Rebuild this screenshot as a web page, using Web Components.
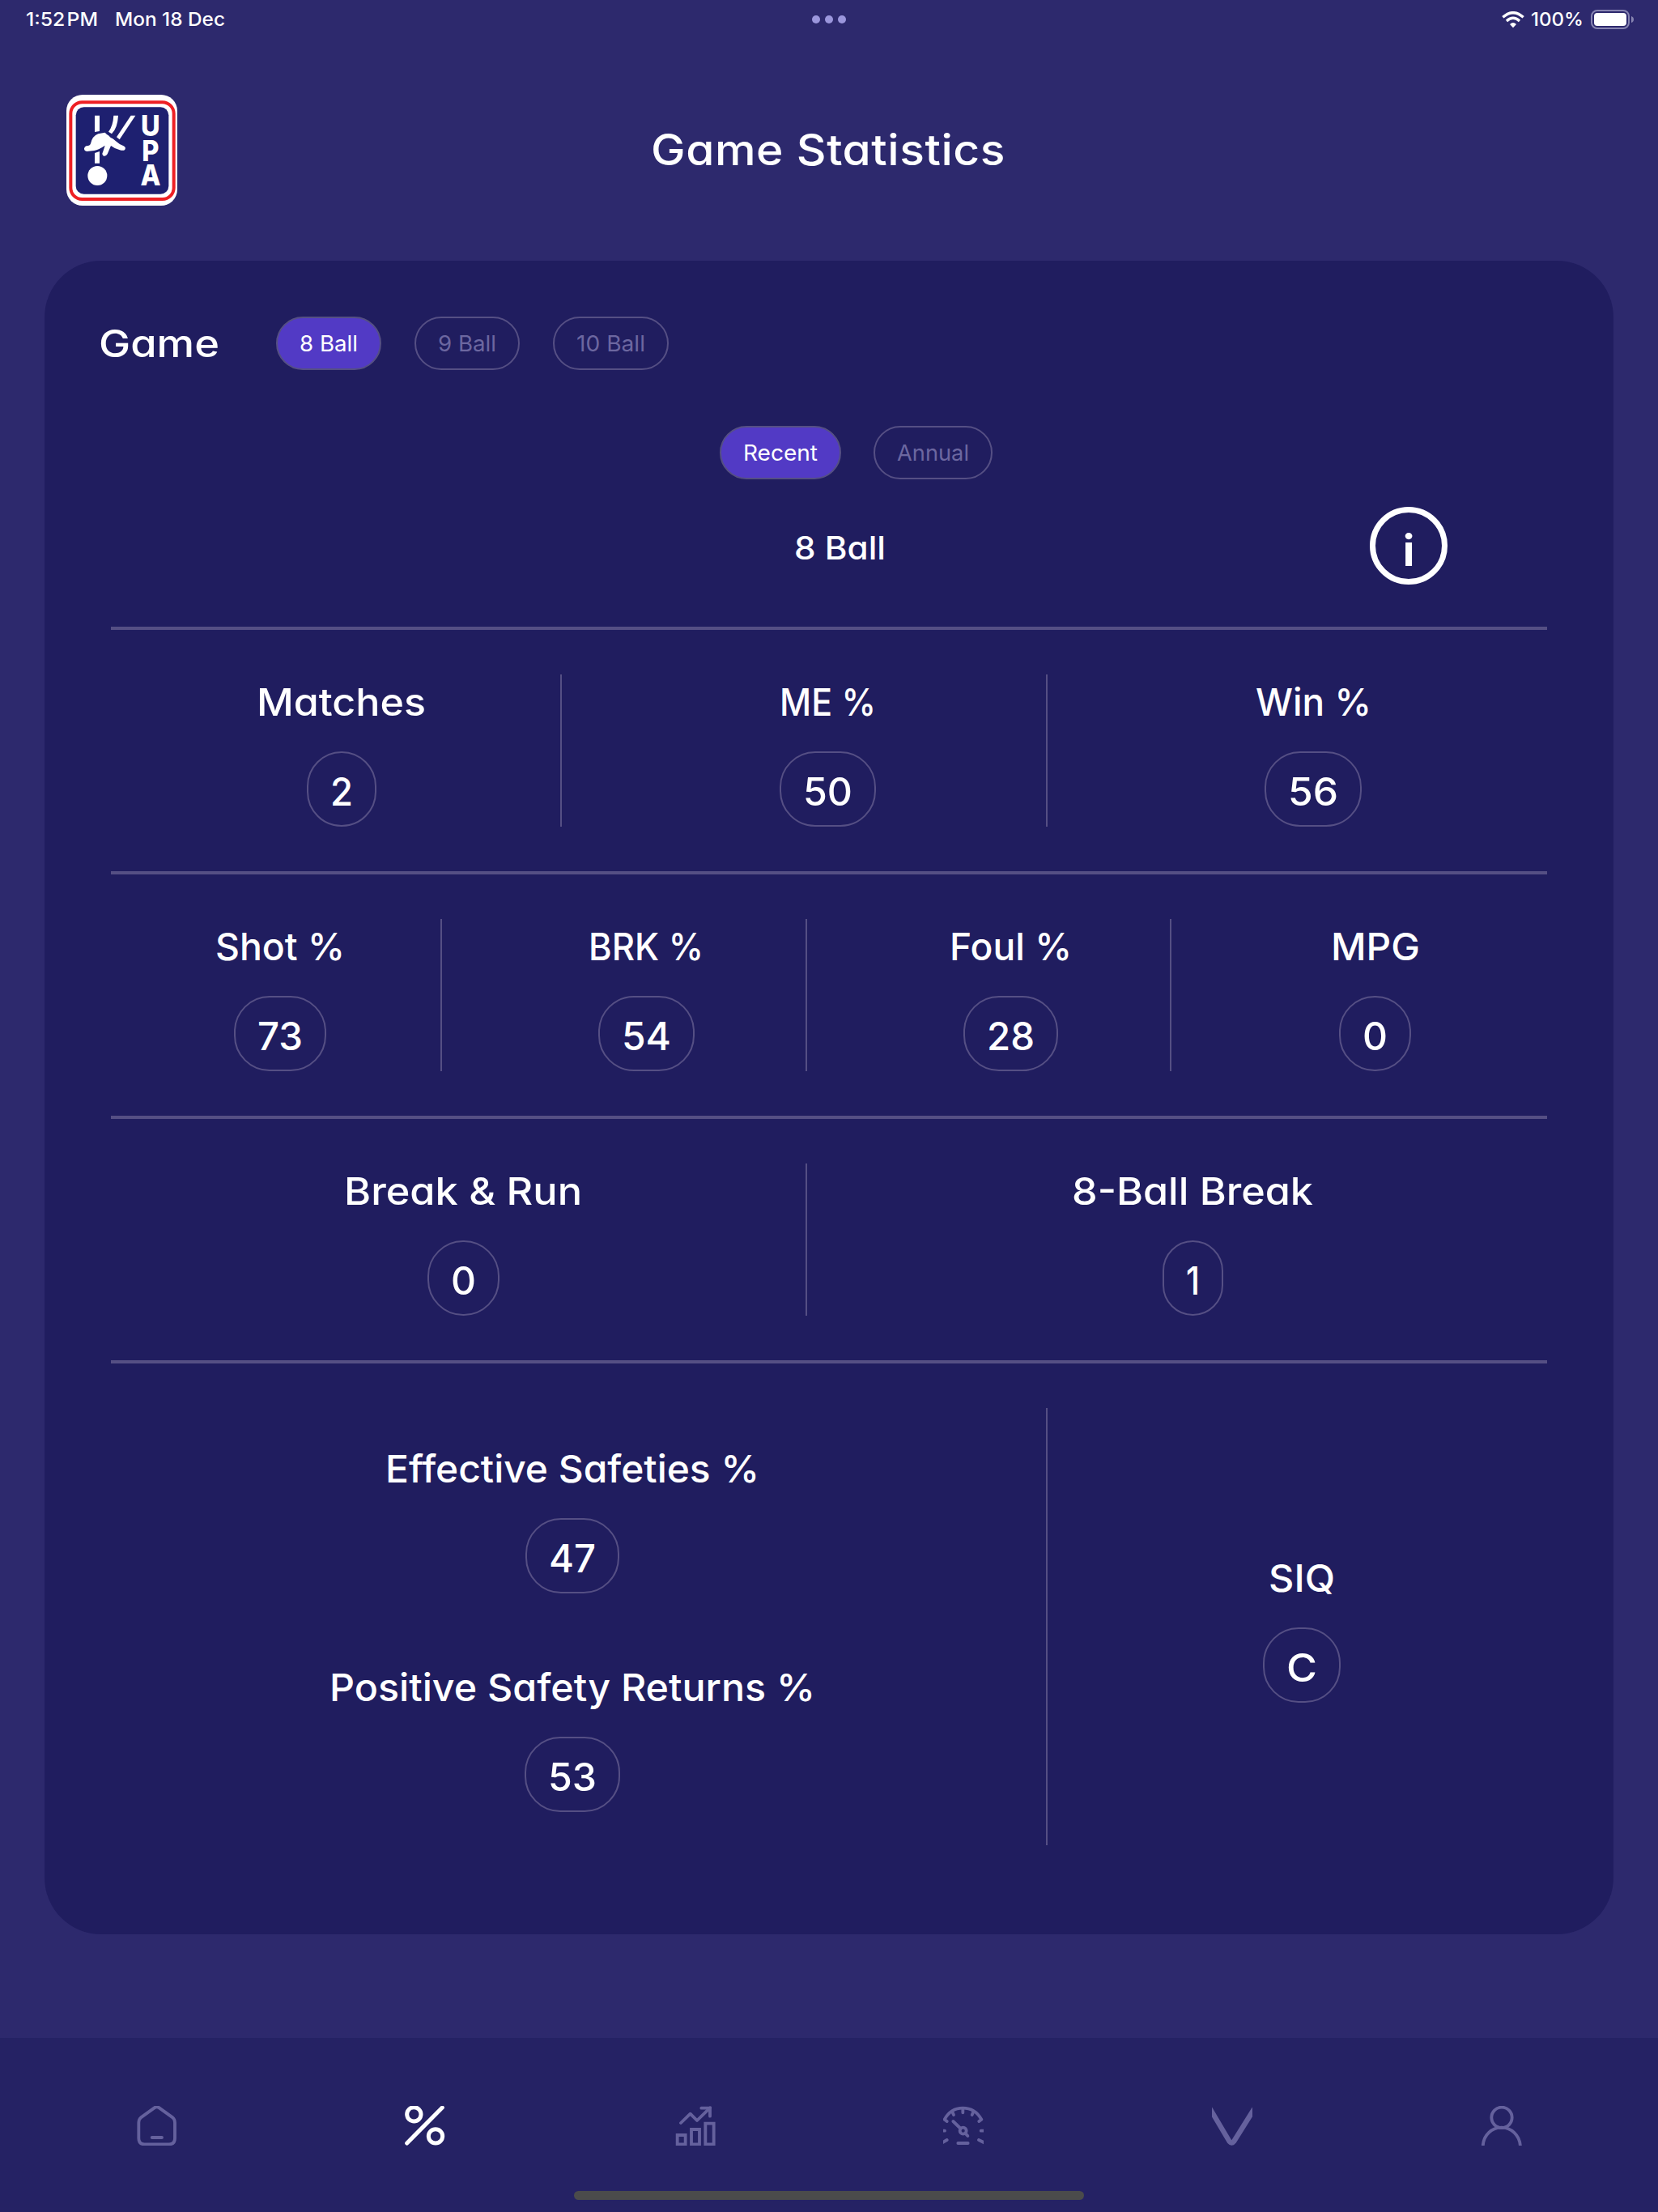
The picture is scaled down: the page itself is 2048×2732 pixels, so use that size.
<!DOCTYPE html>
<html lang="en">
<head>
<meta charset="utf-8">
<title>Game Statistics</title>
<style>
  html, body {
    margin: 0;
    height: 100%;
  }
  body {
    --line: #554f84;
    --muted: #6c67a0;
    --accent: #523ac5;
    background: #2d296d;
    color: #fff;
    font-family: Inter, "Open Sans", sans-serif;
    font-weight: 500;
  }
</style>
</head>
<body>
<stats-app></stats-app>

<script>
// Text run widened or narrowed to a given advance width
class FitText extends HTMLElement {
  constructor() {
    super();
    this.attachShadow({ mode: 'open' });
    this.shadowRoot.innerHTML = `
      <style>
        :host {
          display: block;
          white-space: nowrap;
        }
        span {
          display: block;
          width: max-content;
          transform-origin: 0 50%;
        }
      </style>
      <span><slot></slot></span>
    `;
  }

  connectedCallback() {
    const width = Number(this.getAttribute('width'));
    const span = this.shadowRoot.querySelector('span');
    const natural = span.getBoundingClientRect().width;
    if (!width || !natural) return;
    this.style.width = `${width}px`;
    span.style.transform = `scaleX(${width / natural})`;
  }
}

class StatusBar extends HTMLElement {
  constructor() {
    super();
    this.attachShadow({ mode: 'open' });
    this.shadowRoot.innerHTML = `
      <style>
        :host {
          display: grid;
          grid-template-columns: 1fr auto 1fr;
          align-items: center;
          height: 48px;
          padding: 0 29px;
          box-sizing: border-box;
          font-size: 23px;
          line-height: 28px;
        }
        .left, .right, .dots {
          display: flex;
          align-items: center;
        }
        .left {
          gap: 21px;
          margin-left: 3px;
        }
        .time {
          word-spacing: -4px;
        }
        .right {
          justify-content: flex-end;
        }
        .dots {
          gap: 6px;
        }
        .dots i {
          width: 10px;
          height: 10px;
          border-radius: 50%;
          background: #9b96dc;
        }
        svg {
          display: block;
        }
        .wifi {
          margin-right: 8px;
        }
        .battery {
          margin-left: 9px;
        }
      </style>
      <div class="left">
        <fit-text class="time" width="89">1:52 PM</fit-text>
        <fit-text width="136">Mon 18 Dec</fit-text>
      </div>
      <div class="dots"><i></i><i></i><i></i></div>
      <div class="right">
        <svg class="wifi" width="28" height="21" viewBox="0 0 84 63" fill="none" stroke="#fff">
          <path d="M4 22 Q42 -12 80 22" stroke-width="10"/>
          <path d="M18 36 Q42 14 66 36" stroke-width="10"/>
          <path d="M30 48 Q42 36 54 48 L42 61 Z" fill="#fff" stroke="none"/>
        </svg>
        <fit-text width="65">100%</fit-text>
        <svg class="battery" width="54" height="24" viewBox="0 0 54 24">
          <rect x="1" y="1" width="46" height="22" rx="7" fill="none" stroke="#8784b1" stroke-width="2"/>
          <rect x="4" y="4" width="40" height="16" rx="4" fill="#fff"/>
          <path d="M50 8 Q53 9 53 12 Q53 15 50 16 Z" fill="#8784b1"/>
        </svg>
      </div>
    `;
  }
}

class UpaLogo extends HTMLElement {
  constructor() {
    super();
    this.attachShadow({ mode: 'open' });
    this.shadowRoot.innerHTML = `
      <style>
        :host {
          display: block;
          width: 137px;
          height: 137px;
        }
        svg {
          display: block;
        }
        text {
          font: 800 105px Inter, sans-serif;
          text-anchor: middle;
        }
      </style>
      <svg width="137" height="137" viewBox="246 351 411 411" fill="#fff">
        <rect x="246" y="351" width="411" height="411" rx="60"/>
        <rect x="262" y="379" width="382" height="359" rx="42" fill="none" stroke="#ee2024" stroke-width="12"/>
        <rect x="281" y="397" width="344" height="322" rx="30" fill="#1e2070"/>
        <path d="M351 428h18v58l-18 3z"/>
        <path d="M421 428h17q-2 45-24 68l-12-8q17-22 19-60z"/>
        <path d="M485 428h17l-59 89-11-9z"/>
        <path d="M320 541 Q334 541 336 532 Q342 504 364 496 L389 491 Q395 498 402 502 Q409 511 418 514 L431 524 Q444 536 458 541 Q468 546 463 554 Q458 560 444 556 Q425 551 411 540 L398 571 Q393 580 384 578 Q376 572 381 564 L389 539 Q366 555 349 558 L322 561 Q311 559 312 550 Q314 542 320 541Z"/>
        <path d="M351 567l18-6v44h-18z"/>
        <circle cx="361" cy="651" r="36"/>
        <text transform="scale(.93 1)" x="600 600 600" y="504 597 688">UPA</text>
      </svg>
    `;
  }
}

class PageHeader extends HTMLElement {
  constructor() {
    super();
    this.attachShadow({ mode: 'open' });
    this.shadowRoot.innerHTML = `
      <style>
        :host {
          display: grid;
          grid-template-columns: 137px 1fr 137px;
          align-items: center;
          justify-items: center;
          padding: 69px 85px 68px 82px;
          font-size: 53px;
          line-height: 64px;
          letter-spacing: .01em;
          font-feature-settings: "cv11";
        }
        h1 {
          margin: 0 0 1px;
          font: inherit;
        }
      </style>
      <upa-logo></upa-logo>
      <h1><slot></slot></h1>
    `;
  }
}

class FilterChip extends HTMLElement {
  constructor() {
    super();
    this.attachShadow({ mode: 'open' });
    this.shadowRoot.innerHTML = `
      <style>
        :host {
          display: flex;
          align-items: center;
          height: 66px;
          padding: 0 27px;
          box-sizing: border-box;
          border: 2px solid var(--line);
          border-radius: 33px;
          color: var(--muted);
          font-size: 27.5px;
          font-weight: 400;
          font-feature-settings: normal;
        }
        :host([active]) {
          background: var(--accent);
          color: #fff;
        }
      </style>
      <slot></slot>
    `;
  }
}

class StatCell extends HTMLElement {
  constructor() {
    super();
    this.attachShadow({ mode: 'open' });
  }

  connectedCallback() {
    const label = this.getAttribute('label');
    const value = this.getAttribute('value');
    const width = this.getAttribute('label-width');
    const pill = this.getAttribute('pill-width');

    this.shadowRoot.innerHTML = `
      <style>
        :host {
          display: flex;
          flex-direction: column;
          align-items: center;
          height: 188px;
        }
        .label {
          height: 72px;
          font-size: 47px;
          line-height: 68px;
        }
        .value {
          display: flex;
          align-items: center;
          justify-content: center;
          width: ${pill}px;
          height: 93px;
          margin-top: 23px;
          padding-top: 6px;
          box-sizing: border-box;
          border: 2px solid var(--line);
          border-radius: 44px;
          font-size: 48px;
        }
      </style>
      <div class="label"><fit-text width="${width}">${label.replace('&', '&amp;')}</fit-text></div>
      <div class="value"><fit-text width="${pill - 58}">${value}</fit-text></div>
    `;
  }
}

// One row of cells split by vertical rules, closed above by a horizontal one
class StatRow extends HTMLElement {
  constructor() {
    super();
    this.attachShadow({ mode: 'open' });
  }

  connectedCallback() {
    this.shadowRoot.innerHTML = `
      <style>
        :host {
          display: block;
        }
        .rule {
          height: 4px;
          margin: 0 82px;
          background: var(--line);
        }
        .cells {
          display: grid;
          grid-template-columns: ${this.getAttribute('columns')};
          margin-left: 38px;
          padding: 55px 0;
        }
        ::slotted(*) {
          padding-left: ${this.getAttribute('inset')}px;
          border-right: 2px solid var(--line);
        }
        ::slotted(:last-child) {
          border-right-color: transparent;
        }
      </style>
      <div class="rule"></div>
      <div class="cells"><slot></slot></div>
    `;
  }
}

class StatGroup extends HTMLElement {
  constructor() {
    super();
    this.attachShadow({ mode: 'open' });
    this.shadowRoot.innerHTML = `
      <style>
        :host {
          display: flex;
          flex-direction: column;
          justify-content: center;
          gap: 82px;
          height: 540px;
          box-sizing: border-box;
        }
      </style>
      <slot></slot>
    `;
  }
}

class StatsCard extends HTMLElement {
  constructor() {
    super();
    this.attachShadow({ mode: 'open' });
    this.shadowRoot.innerHTML = `
      <style>
        :host {
          display: block;
          height: 2067px;
          margin: 0 55px;
          padding-top: 69px;
          box-sizing: border-box;
          border-radius: 70px;
          background: #201d5f;
          font-feature-settings: "cv11";
        }
        .games, .periods {
          display: flex;
          align-items: center;
          gap: 41px;
        }
        .games {
          padding-left: 67px;
        }
        .games h2 {
          width: 178px;
          margin: 0;
          font-size: 47px;
          font-weight: 500;
          line-height: 66px;
        }
        .periods {
          margin-top: 69px;
          padding-left: 834px;
          gap: 40px;
        }
        .heading {
          display: grid;
          grid-template-columns: 327px 1310px 96px;
          align-items: center;
          justify-items: center;
          margin: 34px 0 52px;
          font-size: 39px;
        }
        .heading fit-text {
          grid-column: 2;
          padding-top: 4px;
        }
        .info {
          display: flex;
          align-items: center;
          justify-content: center;
          width: 96px;
          height: 96px;
          padding-top: 12px;
          box-sizing: border-box;
          border: 7px solid #fff;
          border-radius: 50%;
          font-size: 54px;
          font-weight: 650;
          line-height: 60px;
        }
      </style>
      <div class="games">
        <h2><fit-text width="149">Game</fit-text></h2>
        <filter-chip active><fit-text width="72">8 Ball</fit-text></filter-chip>
        <filter-chip><fit-text width="72">9 Ball</fit-text></filter-chip>
        <filter-chip><fit-text width="85">10 Ball</fit-text></filter-chip>
      </div>
      <div class="periods">
        <filter-chip active><fit-text width="92">Recent</fit-text></filter-chip>
        <filter-chip><fit-text width="89">Annual</fit-text></filter-chip>
      </div>
      <div class="heading">
        <fit-text width="113">8 Ball</fit-text>
        <div class="info">i</div>
      </div>
      <stat-row columns="601px 600px 600px" inset="58">
        <stat-cell label="Matches" label-width="209" value="2" pill-width="86"></stat-cell>
        <stat-cell label="ME %" label-width="119" value="50" pill-width="119"></stat-cell>
        <stat-cell label="Win %" label-width="143" value="56" pill-width="120"></stat-cell>
      </stat-row>
      <stat-row columns="453px 451px 450px 450px" inset="55">
        <stat-cell label="Shot %" label-width="160" value="73" pill-width="114"></stat-cell>
        <stat-cell label="BRK %" label-width="142" value="54" pill-width="119"></stat-cell>
        <stat-cell label="Foul %" label-width="151" value="28" pill-width="117"></stat-cell>
        <stat-cell label="MPG" label-width="110" value="0" pill-width="89"></stat-cell>
      </stat-row>
      <stat-row columns="904px 898px" inset="56">
        <stat-cell label="Break &amp; Run" label-width="294" value="0" pill-width="89"></stat-cell>
        <stat-cell label="8-Ball Break" label-width="298" value="1" pill-width="75"></stat-cell>
      </stat-row>
      <stat-row columns="1201px 600px" inset="29">
        <stat-group>
          <stat-cell label="Effective Safeties %" label-width="462" value="47" pill-width="116"></stat-cell>
          <stat-cell label="Positive Safety Returns %" label-width="600" value="53" pill-width="118"></stat-cell>
        </stat-group>
        <stat-group>
          <stat-cell label="SIQ" label-width="82" value="C" pill-width="96"></stat-cell>
        </stat-group>
      </stat-row>
    `;
  }
}

const ICONS = {
  home: `
    <path d="M65 7 Q74 1 83 7 L133 43 Q141 50 141 62 V120 Q141 142 120 142 H28 Q7 142 7 120 V62 Q7 50 15 43 Z"/>
    <path d="M56 117H93"/>`,
  percent: `
    <circle cx="34" cy="31" r="26" stroke-width="15"/>
    <circle cx="114" cy="112" r="26" stroke-width="15"/>
    <path d="M139 6L8 138" stroke-width="15"/>`,
  chart: `
    <path d="M21 63L56 29L81 54L129 7"/>
    <path d="M97 8H129V38" stroke-linejoin="miter"/>
    <path d="M8 108H38V142H8ZM60 87H90V142H60ZM112 65H143V142H112Z" stroke-linejoin="miter"/>`,
  gauge: `
    <path d="M14 57L5 50Q28 8 73 8T142 50L133 57"/>
    <path d="M73 10V25M33 20L39 33M113 20L107 33"/>
    <path d="M-4 92H6M140 92H154M14 126L-4 137M132 126L154 137"/>
    <path d="M37 57L65 84M82 101L91 111"/>
    <circle cx="74" cy="92" r="12"/>
    <path d="M55 138H92"/>`,
  chevron: `<path d="M-6 12L65 132Q73 141 81 132L156 12" stroke-width="19"/>`,
  user: `
    <circle cx="75" cy="43" r="38"/>
    <path d="M5.500 152V146C8 108 38 80 74 80S140 108 143.500 146V152"/>`
};

class NavIcon extends HTMLElement {
  constructor() {
    super();
    this.attachShadow({ mode: 'open' });
  }

  connectedCallback() {
    this.shadowRoot.innerHTML = `
      <style>
        :host {
          display: block;
          color: #65619d;
        }
        :host([active]) {
          color: #fff;
        }
        svg {
          display: block;
        }
      </style>
      <svg width="50" height="49" viewBox="0 0 150 147" fill="none" stroke="currentColor"
        stroke-width="11.500" stroke-linecap="round" stroke-linejoin="round">
        ${ICONS[this.getAttribute('name')]}
      </svg>
    `;
  }
}

class TabBar extends HTMLElement {
  constructor() {
    super();
    this.attachShadow({ mode: 'open' });
    this.shadowRoot.innerHTML = `
      <style>
        :host {
          display: flex;
          flex-direction: column;
          align-items: center;
          height: 215px;
          box-sizing: border-box;
          padding-top: 84px;
          background: #252264;
        }
        nav {
          display: grid;
          grid-template-columns: 331px 334px 331px 332px 333px 50px;
          height: 49px;
        }
        .home-indicator {
          width: 630px;
          height: 11px;
          margin-top: 56px;
          border-radius: 6px;
          background: #4b4b4b;
        }
      </style>
      <nav>
        <nav-icon name="home"></nav-icon>
        <nav-icon name="percent" active></nav-icon>
        <nav-icon name="chart"></nav-icon>
        <nav-icon name="gauge"></nav-icon>
        <nav-icon name="chevron"></nav-icon>
        <nav-icon name="user"></nav-icon>
      </nav>
      <div class="home-indicator"></div>
    `;
  }
}

class StatsApp extends HTMLElement {
  constructor() {
    super();
    this.attachShadow({ mode: 'open' });
    this.shadowRoot.innerHTML = `
      <style>
        :host {
          display: flex;
          flex-direction: column;
          width: 2048px;
          height: 2732px;
        }
        tab-bar {
          margin-top: auto;
        }
      </style>
      <status-bar></status-bar>
      <page-header><fit-text width="438">Game Statistics</fit-text></page-header>
      <stats-card></stats-card>
      <tab-bar></tab-bar>
    `;
  }
}

// Containers first, so text is measured once its inherited font is in place
customElements.define('stats-app', StatsApp);
customElements.define('status-bar', StatusBar);
customElements.define('page-header', PageHeader);
customElements.define('upa-logo', UpaLogo);
customElements.define('stats-card', StatsCard);
customElements.define('filter-chip', FilterChip);
customElements.define('stat-row', StatRow);
customElements.define('stat-group', StatGroup);
customElements.define('stat-cell', StatCell);
customElements.define('tab-bar', TabBar);
customElements.define('nav-icon', NavIcon);
customElements.define('fit-text', FitText);
</script>
</body>
</html>
